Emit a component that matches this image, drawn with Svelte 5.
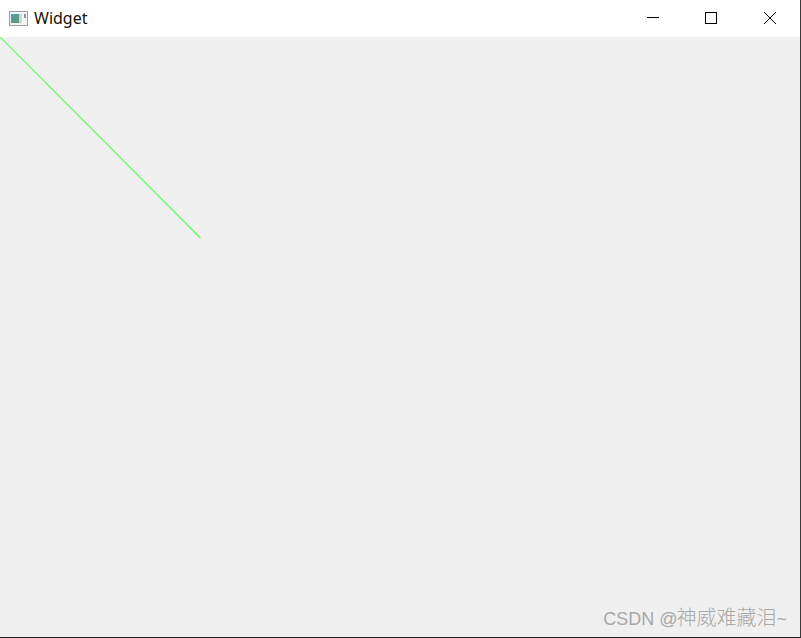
<script>
	const title = 'Widget';
</script>

<div class="window">
	<header class="titlebar">
		<div class="app-icon">
			<svg width="19" height="15" viewBox="0 0 19 15">
				<defs>
					<linearGradient id="pane" x1="0" y1="0" x2="0.6" y2="1">
						<stop offset="0" stop-color="#5a9aa8" />
						<stop offset="1" stop-color="#5a9a78" />
					</linearGradient>
				</defs>
				<rect x="0.5" y="0.5" width="18" height="14" fill="#f2f4f5" stroke="#9a9fa5" />
				<rect x="2" y="3" width="8" height="9" fill="url(#pane)" />
				<rect x="10" y="3" width="3" height="9" fill="#c6dad5" />
				<rect x="15" y="3" width="2" height="4" fill="#87969c" />
			</svg>
		</div>
		<span class="title">{title}</span>
		<div class="controls">
			<button class="ctl" aria-label="Minimize">
				<svg width="12" height="12" viewBox="0 0 12 12"><path d="M0 5.5H12" stroke="#000" fill="none" /></svg>
			</button>
			<button class="ctl" aria-label="Maximize">
				<svg width="12" height="12" viewBox="0 0 12 12"><rect x="0.5" y="0.5" width="11" height="11" stroke="#000" fill="none" /></svg>
			</button>
			<button class="ctl" aria-label="Close">
				<svg width="12" height="12" viewBox="0 0 12 12"><path d="M0 0L12 12M12 0L0 12" stroke="#000" stroke-width="1" fill="none" /></svg>
			</button>
		</div>
	</header>
	<main class="canvas">
		<svg class="drawing" width="800" height="600" viewBox="0 0 800 600">
			<line x1="0" y1="0" x2="200.5" y2="201" stroke="#5cff5c" stroke-width="1.2" />
		</svg>
		<span class="watermark">CSDN @<span class="cjk">神威难藏泪</span>~</span>
	</main>
</div>

<style>
	:global(body) {
		background: #f0f0f0;
	}
	.window {
		width: 801px;
		height: 638px;
		display: flex;
		flex-direction: column;
		box-sizing: border-box;
		border-right: 1px solid #3a3a3a;
		border-bottom: 1px solid #222;
		overflow: hidden;
		font-family: "Liberation Sans", "Noto Sans CJK SC", sans-serif;
	}
	.titlebar {
		height: 37px;
		flex: none;
		background: #fff;
		display: flex;
		align-items: center;
	}
	.app-icon {
		margin-left: 9px;
		margin-top: -1px;
		width: 19px;
		height: 15px;
		display: flex;
	}
	.title {
		margin-left: 6px;
		margin-top: -2px;
		font-family: "Noto Sans", "Liberation Sans", sans-serif;
		font-size: 16px;
		color: #1a1208;
	}
	.controls {
		margin-left: auto;
		margin-top: -1px;
		display: flex;
		height: 100%;
		margin-right: 3px;
	}
	.ctl {
		width: 58px;
		height: 100%;
		padding: 0;
		border: none;
		background: none;
		display: flex;
		align-items: center;
		justify-content: center;
	}
	.ctl:last-child {
		margin-right: -2px;
		margin-left: 1px;
	}
	.canvas {
		flex: 1;
		background: #f0f0f0;
		position: relative;
	}
	.drawing {
		display: block;
	}
	.watermark {
		position: absolute;
		right: 13px;
		bottom: 6px;
		font-size: 18px;
		line-height: 24px;
		color: #a8a8a8;
		white-space: nowrap;
	}
	.cjk {
		margin-left: -1px;
		font-size: 20px;
		font-family: "Noto Sans CJK SC", sans-serif;
		font-weight: 300;
	}
</style>
